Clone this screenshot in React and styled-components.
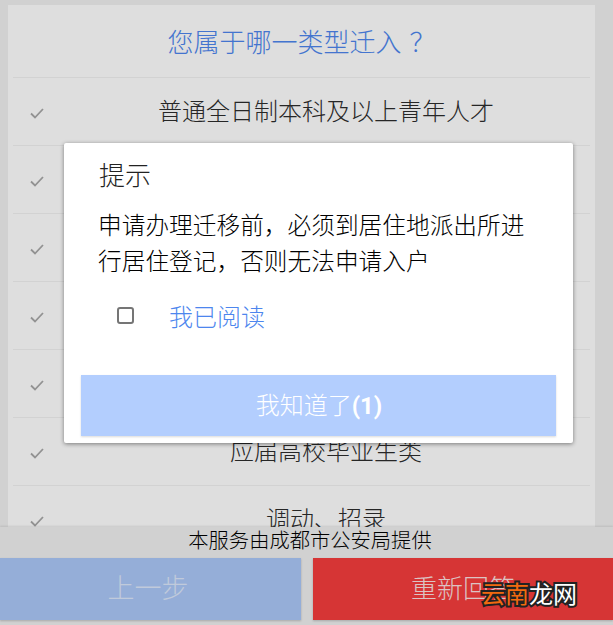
import React from "react";
import styled, { createGlobalStyle } from "styled-components";

const Global = createGlobalStyle`
  html, body { margin: 0; padding: 0; background: #f0f0f0; }
  body { font-family: "Roboto", "Noto Sans CJK SC", sans-serif; font-weight: 300; }
  * { box-sizing: border-box; }
`;
const Page = styled.div`
  position: relative;
  width: 613px;
  height: 625px;
  overflow: hidden;
  display: flex;
  flex-direction: column;
  background: #f0f0f0;
`;
const Card = styled.main`
  flex: 1;
  min-height: 0;
  margin: 5px 18px 0 8px;
  padding: 0 5px;
  background: #fff;
  overflow: hidden;
`;
const Title = styled.h1`
  margin: 0;
  height: 73px;
  line-height: 76px;
  text-align: center;
  font-size: 26px;
  font-weight: 300;
  color: #4d86ee;
  border-bottom: 1px solid #f2f2f2;
`;
const TitleMark = styled.span`
  margin-left: 8px;
`;
const Row = styled.div`
  height: 68px;
  display: grid;
  grid-template-columns: 48px 1fr;
  align-items: center;
  border-bottom: 1px solid #f2f2f2;
  font-size: 24px;
  color: #2c2c2c;
`;
const Label = styled.span`
  text-align: center;
  padding: 0 0 4px 1px;
`;
const Check = styled.svg`
  width: 16px;
  height: 16px;
  margin-left: 16px;
  margin-top: 2px;
  fill: none;
  stroke: #a8a8a8;
  stroke-width: 1.8;
`;
const Footer = styled.footer`
  height: 98px;
  background: #f0f0f0;
  box-shadow: 0 -1px 2px rgba(0, 0, 0, 0.1);
  position: relative;
`;
const Notice = styled.div`
  height: 31px;
  line-height: 28px;
  padding-left: 7px;
  text-align: center;
  font-size: 20.3px;
  color: #000;
`;
const Actions = styled.div`
  display: grid;
  grid-template-columns: 301px 300px;
  justify-content: space-between;
`;
const Action = styled.button`
  height: 62px;
  border: 0;
  padding: 0 ${(p) => p.$shift || 0}px 5px 0;
  font: inherit;
  font-size: ${(p) => p.$size}px;
  color: ${(p) => p.$fg};
  background: ${(p) => p.$bg};
  box-shadow: 0 1px 2px rgba(0, 0, 0, 0.2);
`;
const Overlay = styled.div`
  position: absolute;
  inset: 0;
  background: rgba(0, 0, 0, 0.13);
  padding: 143px 0 0 64px;
`;
const Modal = styled.section`
  width: 509px;
  height: 300px;
  background: #fff;
  border-radius: 2px;
  box-shadow: 0 1px 4px rgba(0, 0, 0, 0.45);
  padding: 0 17px;
  display: flex;
  flex-direction: column;
`;
const ModalTitle = styled.h2`
  margin: 0;
  padding: 15px 0 0 18px;
  font-size: 26px;
  line-height: 36px;
  font-weight: 300;
  color: #222;
`;
const ModalBody = styled.p`
  margin: 14px 0 0;
  padding: 0 30px 0 17px;
  font-size: 23.7px;
  line-height: 36px;
  color: #000;
`;
const Agree = styled.label`
  display: flex;
  align-items: center;
  margin-top: 13px;
  padding-left: 36px;
  height: 44px;
  font-size: 24px;
  color: #4d86ee;
`;
const Box = styled.span`
  width: 17px;
  height: 17px;
  border: 2.5px solid #757575;
  border-radius: 3px;
  margin-right: 35px;
`;
const Confirm = styled.button`
  margin-top: auto;
  margin-bottom: 7px;
  height: 61px;
  border: 0;
  padding: 0 0 5px 1px;
  background: #b3cefe;
  color: #fff;
  font: inherit;
  font-size: 24px;
  box-shadow: 0 1px 2px rgba(0, 0, 0, 0.15);
`;
const Strong = styled.b`
  font-weight: 700;
`;
const Watermark = styled.div`
  position: absolute;
  right: 36px;
  bottom: 17px;
  font-size: 24px;
  line-height: 26px;
  font-weight: 400;
  color: #fff;
  -webkit-text-stroke: 4px #222;
  paint-order: stroke fill;
`;
const Orange = styled.span`
  color: #f26a0f;
`;

const items = [
  "普通全日制本科及以上青年人才",
  "",
  "",
  "",
  "",
  "应届高校毕业生类",
  "调动、招录",
];

export default function App() {
  return (
    <Page>
      <Global />
      <Card>
        <Title>您属于哪一类型迁入<TitleMark>？</TitleMark></Title>
        {items.map((t, i) => (
          <Row key={i}>
            <Check viewBox="0 0 16 16">
              <path d="M2 8.5 L6 12.5 L14 4" />
            </Check>
            <Label>{t}</Label>
          </Row>
        ))}
      </Card>
      <Footer>
        <Notice>本服务由成都市公安局提供</Notice>
        <Actions>
          <Action $bg="#acc8f8" $fg="rgba(255,255,255,0.6)" $size={27} $shift={5}>上一步</Action>
          <Action $bg="#f63d3d" $fg="rgba(255,255,255,0.85)" $size={26}>重新回答</Action>
        </Actions>
      </Footer>
      <Overlay>
        <Modal>
          <ModalTitle>提示</ModalTitle>
          <ModalBody>申请办理迁移前，必须到居住地派出所进行居住登记，否则无法申请入户</ModalBody>
          <Agree>
            <Box />
            我已阅读
          </Agree>
          <Confirm>
            我知道了<Strong>(1)</Strong>
          </Confirm>
        </Modal>
      </Overlay>
      <Watermark>
        <Orange>云南</Orange>龙网
      </Watermark>
    </Page>
  );
}
